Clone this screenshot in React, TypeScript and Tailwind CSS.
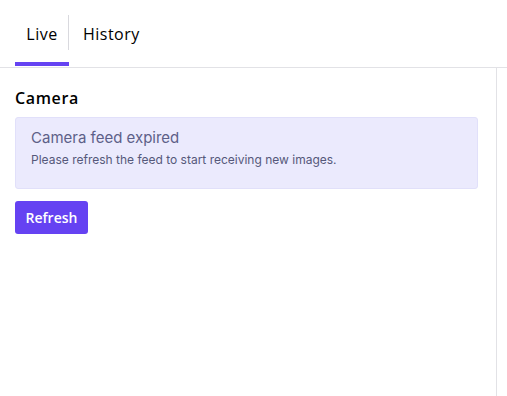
import { useState } from 'react'

const tabs = ['Live', 'History']

export default function App() {
  const [active, setActive] = useState('Live')

  return (
    <div className="w-[507px] h-[396px] bg-white flex flex-col overflow-hidden" style={{ fontFamily: 'Inter, sans-serif' }}>
      {/* Tabs */}
      <div className="flex px-[15px] border-b border-[#e2e2e6] h-[68px]">
        {tabs.map((t, i) => (
          <button
            key={t}
            type="button"
            onClick={() => setActive(t)}
            className={`relative flex items-center h-full ${i === 0 ? 'w-[54px] justify-center' : 'pl-[14px] pr-3'}`}
          >
            <span className="text-[16px] font-medium tracking-[0.03em] text-black" style={{ fontFamily: '"Open Sans", sans-serif' }}>{t}</span>
            {i === 0 && <span className="absolute right-0 top-[15px] h-[35px] w-px bg-[#d9d9de]" />}
            {active === t && <span className="absolute left-0 right-0 bottom-[1px] h-[4px] bg-[#6543f2]" />}
          </button>
        ))}
      </div>

      <div className="flex flex-1">
        <div className="w-[497px] border-r border-[#e2e2e6] pl-[15px] pr-[18px] pt-[19px]">
          <h2 className="text-[16px] font-semibold tracking-[0.04em] text-black leading-[22px]" style={{ fontFamily: '"Open Sans", sans-serif' }}>Camera</h2>

          <div className="mt-[8px] h-[72px] rounded-[3px] border border-[#e1e0fa] bg-[#ebeafd] px-[15px] pt-[10px]">
            <p className="text-[15px] leading-[20px] text-[#5d6088]">Camera feed expired</p>
            <p className="mt-[4px] text-[12px] leading-[16px] text-[#55587a]">Please refresh the feed to start receiving new images.</p>
          </div>

          <button
            type="button"
            className="mt-[12px] h-[33px] w-[73px] rounded-[3px] bg-[#6542f2] text-[14px] font-semibold text-white"
            style={{ fontFamily: '"Open Sans", sans-serif' }}
          >
            Refresh
          </button>
        </div>
      </div>
    </div>
  )
}
